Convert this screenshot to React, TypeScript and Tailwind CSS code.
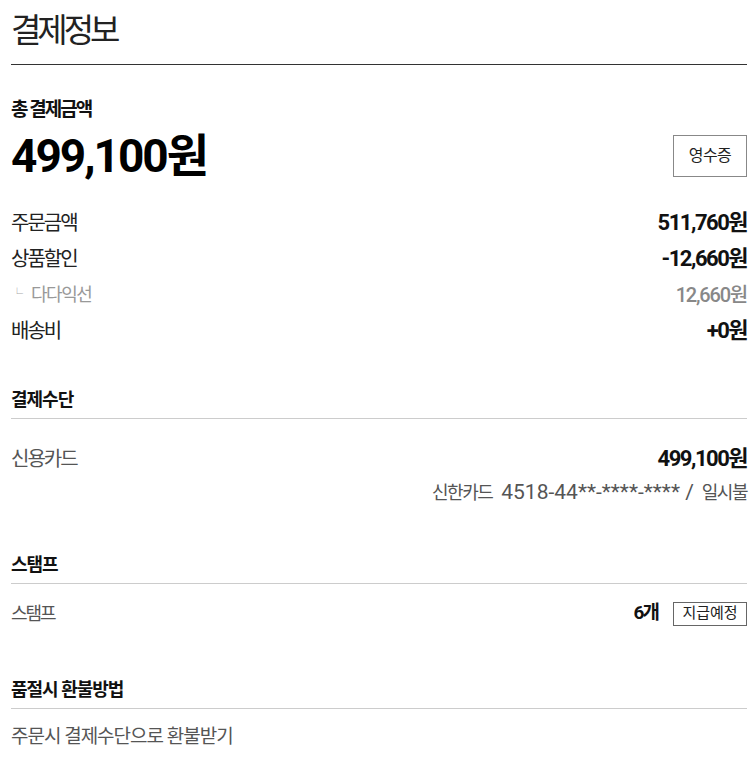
const font = { fontFamily: "Roboto, 'Noto Sans CJK KR', sans-serif" };

function Row({ label, value, sub }: { label: string; value: string; sub?: boolean }) {
  return (
    <div className="flex h-[36px] items-center justify-between">
      {sub ? (
        <span className="flex items-center text-[18px] tracking-[-1.5px] text-[#999]">
          <span className="mr-[8px] text-[12px] tracking-normal text-[#aaa]">└</span>
          {label}
        </span>
      ) : (
        <span className="text-[20px] tracking-[-2px] text-[#222]">{label}</span>
      )}
      <span
        className={
          sub
            ? 'text-[20px] font-medium tracking-[-1.2px] text-[#888]'
            : 'text-[22px] font-bold tracking-[-1.5px] text-[#111]'
        }
      >
        {value}
      </span>
    </div>
  );
}

function SectionTitle({ children }: { children: string }) {
  return (
    <div className="flex h-[38px] items-center border-b border-[#ccc] text-[18px] font-bold tracking-[-1px] text-[#111]">
      {children}
    </div>
  );
}

export default function App() {
  return (
    <div className="min-h-[758px] bg-white pl-[11px] pr-[3px]" style={font}>
      {/* 제목 */}
      <div className="flex h-[65px] items-center border-b border-[#333] pb-[2px]">
        <h1 className="text-[33px] font-normal tracking-[-4px] text-[#222]">결제정보</h1>
      </div>

      {/* 총 결제금액 */}
      <div className="pt-[31px]">
        <div className="text-[19px] font-bold tracking-[-2px] text-[#111]">총 결제금액</div>
        <div className="mt-[5px] flex items-center justify-between">
          <span className="text-[46px] font-bold leading-[52px] tracking-[-2px] text-[#000]">499,100원</span>
          <button className="h-[42px] w-[74px] border border-[#888] text-[16px] tracking-[-0.5px] text-[#222]">
            영수증
          </button>
        </div>
      </div>

      <div className="mt-[23px]">
        <Row label="주문금액" value="511,760원" />
        <Row label="상품할인" value="-12,660원" />
        <Row label="다다익선" value="12,660원" sub />
        <Row label="배송비" value="+0원" />
      </div>

      {/* 결제수단 */}
      <div className="mt-[32px]">
        <SectionTitle>결제수단</SectionTitle>
        <div className="pt-[26px]">
          <div className="flex h-[28px] items-center justify-between">
            <span className="text-[20px] tracking-[-2px] text-[#555]">신용카드</span>
            <span className="text-[22px] font-bold tracking-[-1.5px] text-[#111]">499,100원</span>
          </div>
          <div className="mt-[6px] flex h-[28px] items-center justify-end text-[#555]">
            <span className="text-[18px] tracking-[-1.5px]">신한카드</span>
            <span className="ml-[9px] text-[21px] tracking-[0px]">4518-44**-****-**** /</span>
            <span className="ml-[8px] text-[18px] tracking-[-1.5px]">일시불</span>
          </div>
        </div>
      </div>

      {/* 스탬프 */}
      <div className="mt-[39px]">
        <SectionTitle>스탬프</SectionTitle>
        <div className="flex h-[60px] items-center justify-between">
          <span className="text-[18px] tracking-[-2px] text-[#555]">스탬프</span>
          <div className="flex items-center gap-[15px]">
            <span className="text-[19px] font-bold tracking-[-2px] text-[#111]">6개</span>
            <span className="flex h-[24px] w-[74px] items-center justify-center border border-[#666] text-[15px] text-[#222]">
              지급예정
            </span>
          </div>
        </div>
      </div>

      {/* 품절시 환불방법 */}
      <div className="mt-[27px]">
        <SectionTitle>품절시 환불방법</SectionTitle>
        <div className="flex h-[58px] items-center text-[19px] tracking-[-1px] text-[#555]">
          주문시 결제수단으로 환불받기
        </div>
      </div>
    </div>
  );
}
